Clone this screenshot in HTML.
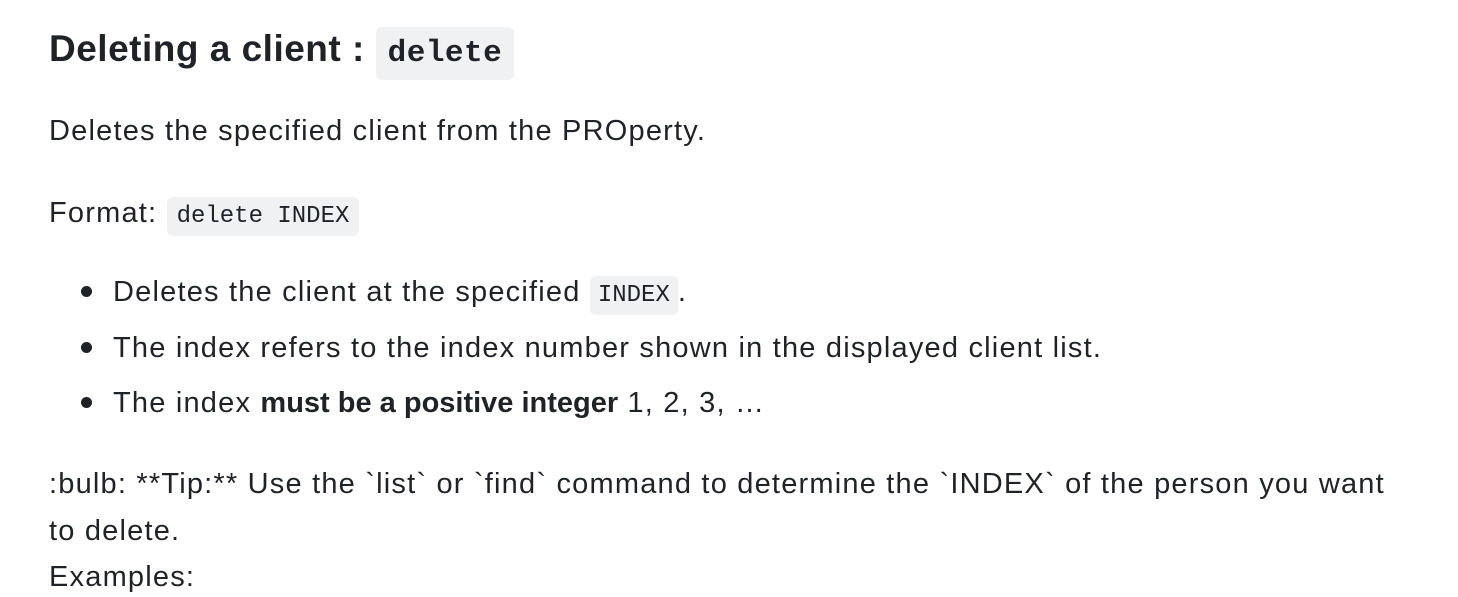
<!DOCTYPE html>
<html><head><style>
body{margin:0;width:1458px;height:570px;overflow:hidden;background:#fff;color:#1f2328;font-family:"Liberation Sans",sans-serif;font-size:29px;letter-spacing:1.2px;}
.l{position:absolute;left:49px;white-space:nowrap;line-height:40px;}
code{font-family:"Liberation Mono",monospace;background:#eff1f3;border-radius:6px;padding:6px 10px;font-size:24px;letter-spacing:0;}
h2{position:absolute;left:49px;top:22px;margin:0;font-size:37px;line-height:54px;font-weight:bold;white-space:nowrap;letter-spacing:0.5px;}
h2 code{font-size:31px;font-weight:bold;padding:9px 12px;letter-spacing:0.5px;}
.dot{position:absolute;left:81px;width:11px;height:11px;border-radius:50%;background:#1f2328;}
b{letter-spacing:0;}
</style></head><body>
<h2>Deleting a client : <code>delete</code></h2>
<div class="l" style="top:111px">Deletes the specified client from the PROperty.</div>
<div class="l" style="top:193px">Format: <code>delete INDEX</code></div>
<div class="dot" style="top:286px"></div>
<div class="l" style="left:113px;top:272px">Deletes the client at the specified <code style="padding:6px 8px">INDEX</code>.</div>
<div class="dot" style="top:342px"></div>
<div class="l" style="left:113px;top:328px">The index refers to the index number shown in the displayed client list.</div>
<div class="dot" style="top:397px"></div>
<div class="l" style="left:113px;top:383px">The index <b>must be a positive integer</b> 1, 2, 3, …</div>
<div class="l" style="top:464px">:bulb: **Tip:** Use the `list` or `find` command to determine the `INDEX` of the person you want</div>
<div class="l" style="top:511px">to delete.</div>
<div class="l" style="top:557px">Examples:</div>
</body></html>
